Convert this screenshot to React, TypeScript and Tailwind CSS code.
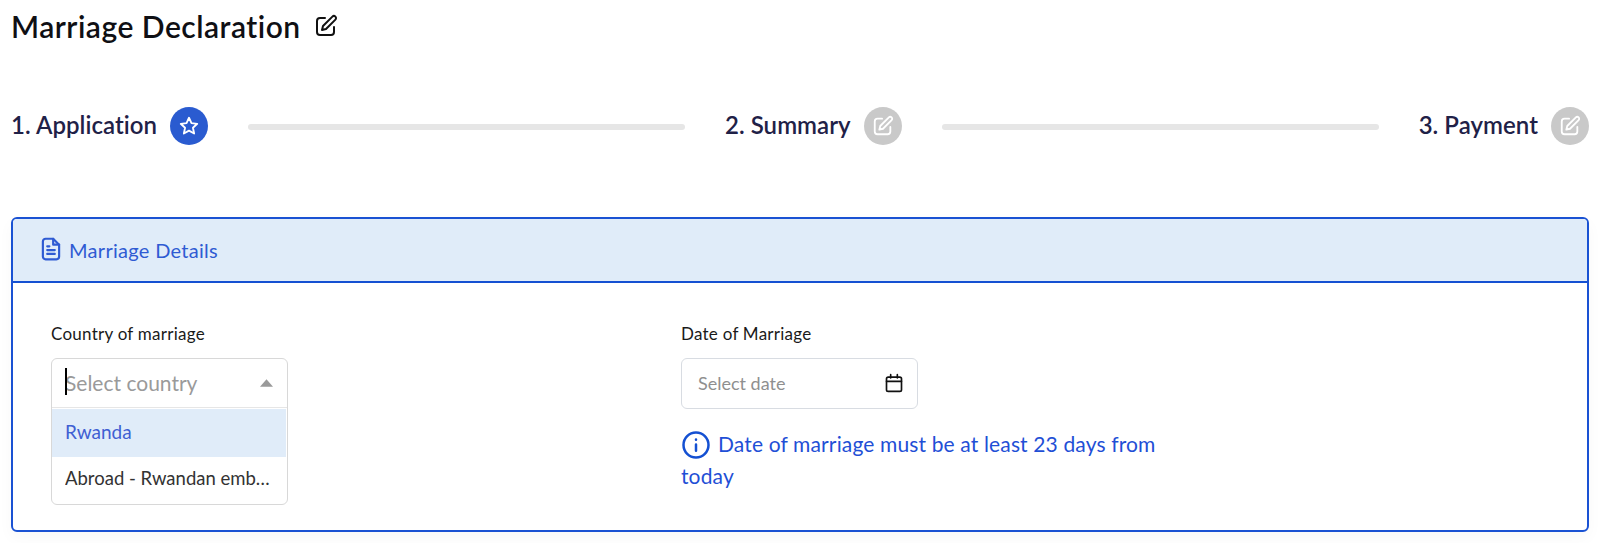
import React from "react";

const EditIcon = ({ className }: { className: string }) => (
  <svg viewBox="0 0 24 24" fill="none" stroke="currentColor" strokeWidth="2" strokeLinecap="round" strokeLinejoin="round" className={className}>
    <path d="M11 4H6a3 3 0 0 0-3 3v11a3 3 0 0 0 3 3h11a3 3 0 0 0 3-3v-5" />
    <path d="M18.4 2.6a2.1 2.1 0 0 1 3 3L12 15l-4 1 1-4 9.4-9.4z" />
  </svg>
);

const Step = ({ label, active }: { label: string; active?: boolean }) => (
  <div className="flex items-center gap-[13px] shrink-0">
    <span className="text-[24px] leading-[30px] -mt-[3px] font-semibold tracking-[0.05px] text-[#1f2147]">{label}</span>
    {active ? (
      <span className="w-[38px] h-[38px] rounded-full bg-[#2a5bd0] flex items-center justify-center text-white">
        <svg viewBox="0 0 24 24" fill="none" stroke="currentColor" strokeWidth="2" strokeLinejoin="round" className="w-[22px] h-[22px]">
          <path d="M12 3l2.7 5.9 6.3.7-4.7 4.3 1.3 6.3L12 17.1l-5.6 3.1 1.3-6.3L3 9.6l6.3-.7L12 3z" />
        </svg>
      </span>
    ) : (
      <span className="w-[38px] h-[38px] rounded-full bg-[#c9c9c9] flex items-center justify-center text-white">
        <EditIcon className="w-[22px] h-[22px]" />
      </span>
    )}
  </div>
);

const Bar = () => <div className="flex-1 h-[6px] mt-[1px] rounded-full bg-[#e6e6e6] mx-10" />;

export default function App() {
  return (
    <div className="w-[1600px] h-[543px] bg-white px-[11px] pt-[7px] overflow-hidden font-['Lato','Noto_Sans',sans-serif]">
      <div className="flex items-center gap-[13px] h-[38px]">
        <h1 className="text-[30px] leading-[38px] tracking-[0.5px] font-semibold text-[#0f0f14]">Marriage Declaration</h1>
        <EditIcon className="w-[24px] h-[24px] text-[#111]" />
      </div>

      <div className="flex items-center mt-[62px] h-[38px]">
        <Step label="1. Application" active />
        <Bar />
        <Step label="2. Summary" />
        <Bar />
        <Step label="3. Payment" />
      </div>

      <div className="mt-[72px] h-[315px] rounded-[6px] border-2 border-[#1a52d3] overflow-hidden shadow-[0_6px_16px_rgba(0,0,0,0.03)]">
        <div className="h-[64px] bg-[#e0ecf9] border-b-2 border-[#1450d2] flex items-center pl-[25px] gap-[5px] text-[#2f5bd3]">
          <svg viewBox="0 0 24 24" fill="none" stroke="currentColor" strokeWidth="2" strokeLinecap="round" strokeLinejoin="round" className="w-[26px] h-[26px] -mt-[3px]">
            <path d="M14 2.5H7a2.5 2.5 0 0 0-2.5 2.5v14A2.5 2.5 0 0 0 7 21.5h10a2.5 2.5 0 0 0 2.5-2.5V8L14 2.5z" />
            <path d="M14 2.5V8h5.5M8.5 9.5h2M8.5 13h7M8.5 16.5h7" />
          </svg>
          <span className="text-[20px] leading-[26px] tracking-[0.3px] -mt-[1px]">Marriage Details</span>
        </div>

        <div className="flex pl-[38px] pt-[40px]">
          <div className="w-[630px]">
            <div className="text-[17px] leading-[22px] tracking-[0.25px] text-[#1a1a1a]">Country of marriage</div>
            <div className="mt-[13px] w-[237px] border border-[#d8d8d8] rounded-[6px] overflow-hidden">
              <div className="h-[49px] flex items-center border-b border-[#e6e6e6] pl-[13px] pr-[14px] relative">
                <span className="absolute left-[13px] top-[9px] w-[2px] h-[27px] bg-black" />
                <span className="text-[21px] text-[#9a9a9a] flex-1">Select country</span>
                <svg viewBox="0 0 14 8" className="w-[13px] h-[8px] text-[#9a9a9a]" fill="currentColor">
                  <path d="M7 0l7 8H0z" />
                </svg>
              </div>
              <div className="h-[48px] mt-[1px] mr-[1px] pb-[2px] bg-[#e0ecf9] flex items-center pl-[13px] text-[19px] text-[#3f5fd3]">Rwanda</div>
              <div className="h-[47px] pb-[3px] flex items-center pl-[13px] pr-[16px] text-[18.5px] text-[#333333]">
                <span className="truncate">Abroad - Rwandan embassy</span>
              </div>
            </div>
          </div>

          <div className="w-[490px]">
            <div className="text-[17px] leading-[22px] tracking-[0.25px] text-[#1a1a1a]">Date of Marriage</div>
            <div className="mt-[13px] w-[237px] h-[51px] border border-[#d8dce2] rounded-[6px] flex items-center pl-[16px] pr-[13px]">
              <span className="flex-1 text-[18px] text-[#8f8f8f]">Select date</span>
              <svg viewBox="0 0 24 24" fill="none" stroke="currentColor" strokeWidth="2" strokeLinecap="round" strokeLinejoin="round" className="w-[20px] h-[20px] -mt-[2px] text-[#111]">
                <rect x="3" y="5" width="18" height="17" rx="2" />
                <path d="M3 10h18M8 2v4M16 2v4" />
              </svg>
            </div>
            <div className="mt-[19px] text-[21px] leading-[31px] tracking-[0.14px] text-[#1f4fd6]">
              <svg viewBox="0 0 24 24" fill="none" stroke="currentColor" strokeWidth="2" strokeLinecap="round" className="inline-block w-[30px] h-[30px] mr-[7px] align-[-8px] text-[#1450d2]">
                <circle cx="12" cy="12" r="10" />
                <path d="M12 11.5v5M12 7.5v.2" />
              </svg>
              Date of marriage must be at least 23 days from today
            </div>
          </div>
        </div>
      </div>
    </div>
  );
}
